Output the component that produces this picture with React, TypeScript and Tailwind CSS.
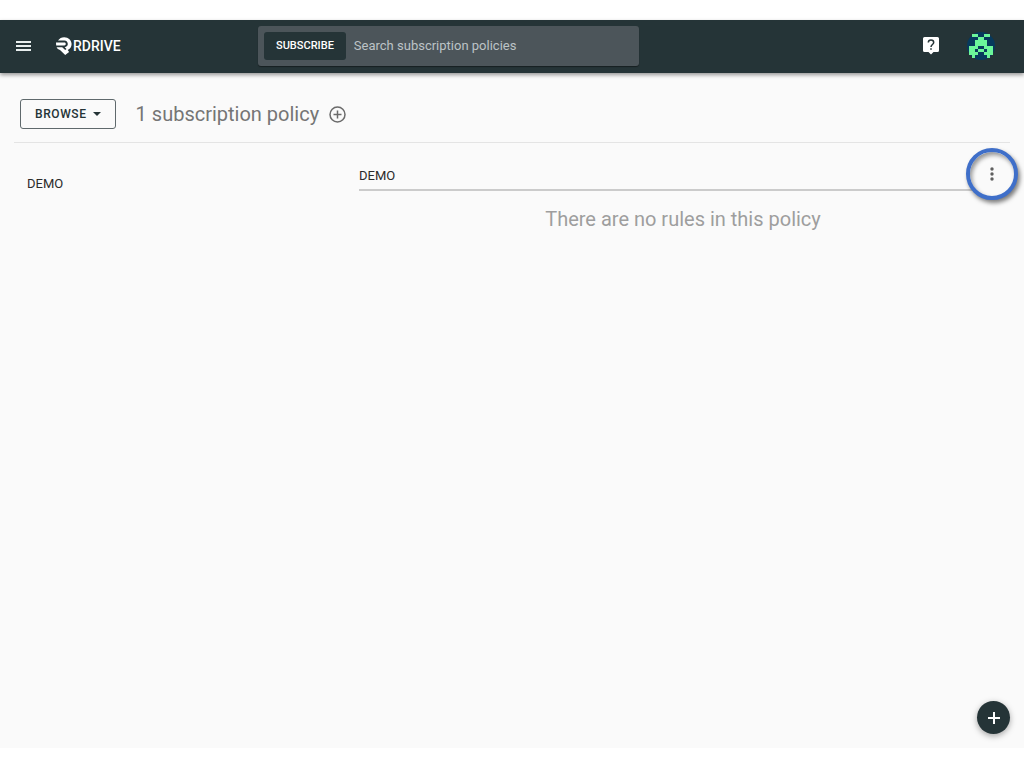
import React, { useState } from "react";

const AVATAR_ROWS = [
  ".XX..XX.",
  "...XX...",
  "..XXXX..",
  "..XXXX..",
  "XXX..XXX",
  "XX.XX.XX",
  "XXX..XXX",
  ".X....X.",
];

const Logo: React.FC = () => (
  <a href="#" className="flex items-center text-white" aria-label="RDRIVE">
    <svg width="17" height="20" viewBox="0 0 17 20" aria-hidden="true">
      <path
        d="M2 4.600C3.400 2.400 5.600 1.200 8.200 1.200c4.200 0 7.400 2.900 7.400 6.900 0 2.800-1.500 5-3.900 6l1.400 1.800-3.900 3.100-5.200-5.100C2.500 13.500 1.200 12.700.6 11.200h5.600l3 2.900 1.300-1-1.800-1.900c2-.2 3.100-1.500 3.100-3.100 0-1.800-1.300-3.500-3.500-3.500z"
        fill="currentColor"
      />
      <path d="M0 6.600h8.300c2 0 2 2.800 0 2.800H.2z" fill="currentColor" />
    </svg>
    <span className="text-sm leading-5 font-medium">RDRIVE</span>
  </a>
);

const Avatar: React.FC = () => (
  <svg width="28" height="28" viewBox="0 0 28 28" aria-hidden="true">
    <circle cx="14" cy="14" r="14" fill="#07395c" />
    <g fill="#6bf59a" shapeRendering="crispEdges">
      {AVATAR_ROWS.flatMap((row, y) =>
        row
          .split("")
          .map((cell, x) =>
            cell === "X" ? (
              <rect
                key={`${x}-${y}`}
                x={2 + x * 3}
                y={2 + y * 3}
                width="3"
                height="3"
              />
            ) : null
          )
      )}
    </g>
  </svg>
);

const Header: React.FC = () => {
  const [query, setQuery] = useState<string>("");

  return (
    <header className="relative z-10 flex items-center bg-[#253437] pt-1.5 pr-[29px] pb-[7px] pl-4 shadow-[0_2px_4px_rgba(0,0,0,0.4)]">
      <div className="flex w-[242px] items-center gap-6">
        <button type="button" aria-label="Menu" className="text-[#e8eeee]">
          <svg width="16" height="12" viewBox="0 0 16 12" fill="currentColor">
            <path d="M0 1h15v2H0zM0 5h15v2H0zM0 9h15v2H0z" />
          </svg>
        </button>
        <Logo />
      </div>
      <div className="flex w-[381px] items-center gap-2 rounded-[3px] bg-[#4c555a] p-1.5 shadow-[0_1px_1px_rgba(0,0,0,0.4)]">
        <button
          type="button"
          className="rounded-[3px] bg-[#253437] px-3 py-1.5 text-[11px] leading-4 font-medium text-white"
        >
          SUBSCRIBE
        </button>
        <input
          type="text"
          aria-label="Search subscription policies"
          placeholder="Search subscription policies"
          value={query}
          onChange={(e) => setQuery(e.target.value)}
          className="min-w-0 flex-1 bg-transparent text-[13px] leading-5 text-white outline-none placeholder:text-[#bcc3c6]"
        />
      </div>
      <div className="ml-auto flex items-center gap-7">
        <button type="button" aria-label="Help">
          <svg width="16" height="18" viewBox="0 0 16 18">
            <path
              d="M1.500 0h13A1.500 1.500 0 0 1 16 1.500v12a1.500 1.500 0 0 1-1.500 1.500H10.500L8 17.500 5.500 15h-4A1.500 1.500 0 0 1 0 13.500v-12A1.500 1.500 0 0 1 1.500 0z"
              fill="#fff"
            />
            <path
              d="M5.300 5.600C5.300 3.900 6.500 2.900 8 2.900s2.700 1 2.700 2.500C10.700 7.400 8 7.600 8 10"
              fill="none"
              stroke="#253437"
              strokeWidth="1.500"
            />
            <path d="M7.200 11.200h1.600v1.600H7.200z" fill="#253437" />
          </svg>
        </button>
        <button type="button" aria-label="Account">
          <Avatar />
        </button>
      </div>
    </header>
  );
};

const Toolbar: React.FC = () => (
  <div className="mx-3.5 flex items-center border-b border-[#e4e4e4] px-1.5 pt-6.5 pb-[13px]">
    <button
      type="button"
      className="flex items-center gap-1.5 rounded-[3px] border border-[#5f696c] px-3.5 py-1.5 text-xs leading-4 font-medium tracking-wider text-[#253437]"
    >
      BROWSE
      <svg width="8" height="4" viewBox="0 0 8 4" fill="currentColor">
        <path d="M0 0h8L4 4z" />
      </svg>
    </button>
    <h1 className="ml-5 text-xl leading-7 text-[#757575]">
      1 subscription policy
    </h1>
    <button type="button" aria-label="Add policy" className="ml-2.5">
      <svg
        width="17"
        height="17"
        viewBox="0 0 17 17"
        fill="none"
        stroke="#6b6b6b"
        strokeWidth="1.500"
      >
        <circle cx="8.500" cy="8.500" r="7.500" />
        <path d="M8.500 4.500v8M4.500 8.500h8" />
      </svg>
    </button>
  </div>
);

const Policy: React.FC = () => {
  const [name, setName] = useState<string>("DEMO");

  return (
    <section className="relative min-w-0 flex-1 pt-5 pr-[17px]">
      <input
        type="text"
        aria-label="Policy name"
        value={name}
        onChange={(e) => setName(e.target.value)}
        className="block w-full border-b-2 border-[#cbcbcb] bg-transparent pt-[3px] pb-[3px] text-[13px] leading-5 text-[#2b2b2b] outline-none"
      />
      <p className="pt-4 text-center text-xl leading-6 text-[#9e9e9e]">
        There are no rules in this policy
      </p>
      <button
        type="button"
        aria-label="Policy options"
        className="absolute top-[5px] right-1.5 flex size-[52px] items-center justify-center rounded-full border-4 border-[#3f6fc9] bg-[#fafafa] shadow-[2px_3px_4px_rgba(0,0,0,0.5),inset_2px_3px_4px_rgba(0,0,0,0.4)]"
      >
        <svg width="4" height="14" viewBox="0 0 4 14" fill="#5f5f5f">
          <circle cx="2" cy="2" r="1.700" />
          <circle cx="2" cy="7" r="1.700" />
          <circle cx="2" cy="12" r="1.700" />
        </svg>
      </button>
    </section>
  );
};

const App: React.FC = () => (
  <div className="flex min-h-screen flex-col bg-white py-5 font-[Roboto,'Liberation_Sans',sans-serif]">
    <Header />
    <main className="relative flex flex-1 flex-col bg-[#fafafa]">
      <Toolbar />
      <div className="flex">
        <nav className="w-[359px] pt-[31px] pl-[27px] text-[13px] leading-5 text-[#2b2b2b]">
          <a href="#">DEMO</a>
        </nav>
        <Policy />
      </div>
      <button
        type="button"
        aria-label="Add"
        className="absolute right-3.5 bottom-3.5 flex size-[33px] items-center justify-center rounded-full bg-[#253437] shadow-[0_2px_6px_rgba(0,0,0,0.35)]"
      >
        <svg width="12" height="12" viewBox="0 0 12 12" stroke="#fff">
          <path d="M6 0v12M0 6h12" strokeWidth="2" />
        </svg>
      </button>
    </main>
  </div>
);

export default App;
